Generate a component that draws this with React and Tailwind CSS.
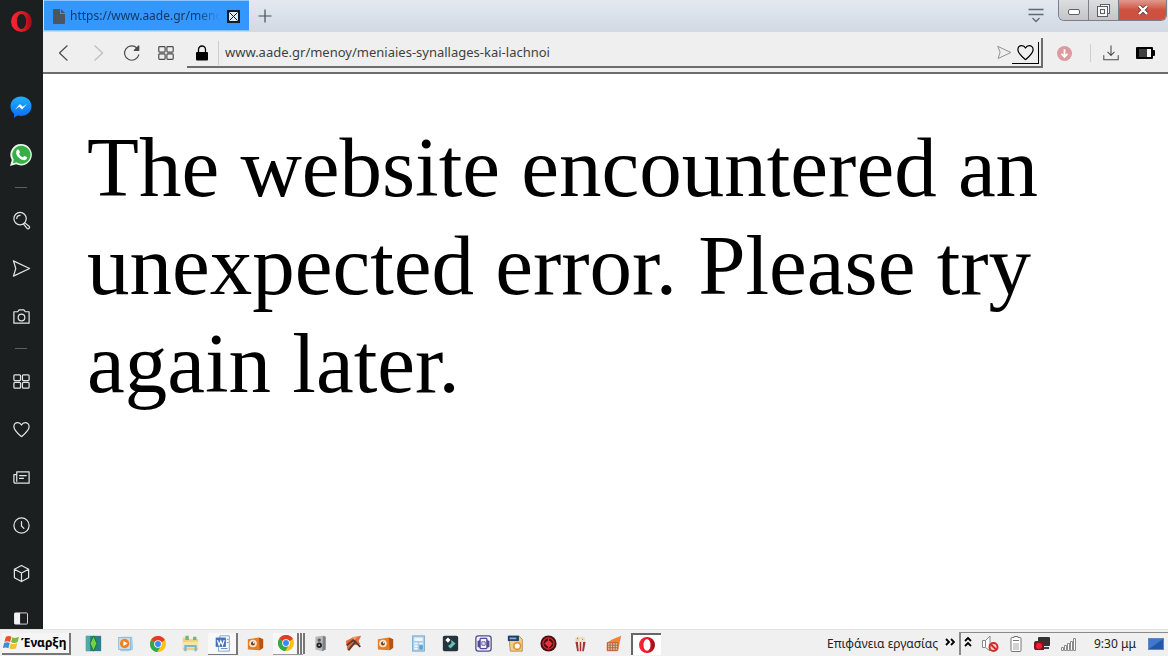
import React from 'react';

const line = { fill: 'none', stroke: 'currentColor', strokeWidth: 1.3, strokeLinejoin: 'round', strokeLinecap: 'round' };

const Icon = ({ box = 20, className = 'size-5', children }) => (
    <svg viewBox={`0 0 ${box} ${box}`} className={`shrink-0 ${className}`} aria-hidden="true" {...line}>{children}</svg>
);

const OperaLogo = ({ className, id }) => (
    <svg viewBox="0 0 22 22" className={className} aria-hidden="true">
        <defs>
            <linearGradient id={id} x1="0" y1="0" x2="1" y2="0">
                <stop offset="0" stopColor="#ff2436" />
                <stop offset="0.55" stopColor="#e01a28" />
                <stop offset="1" stopColor="#9c0a12" />
            </linearGradient>
        </defs>
        <path fill={`url(#${id})`} fillRule="evenodd" d="M11 0a11 11 0 1 0 0 22a11 11 0 0 0 0-22zM11 3.200c2.900 0 4.800 3.600 4.800 7.800s-1.900 7.800-4.800 7.800s-4.800-3.600-4.800-7.800s1.900-7.800 4.800-7.800z" />
    </svg>
);

const ChromeLogo = () => (
    <svg viewBox="0 0 20 20" className="size-4 shrink-0" aria-hidden="true">
        <circle cx="10" cy="10" r="10" fill="#fbc116" />
        <path d="M10 10L1.300 5A10 10 0 0 1 18.700 5z" fill="#e33b2e" />
        <path d="M10 10L1.300 5A10 10 0 0 0 9 20l5-8z" fill="#2da94f" />
        <circle cx="10" cy="10" r="4.800" fill="#fff" />
        <circle cx="10" cy="10" r="3.700" fill="#4285f4" />
    </svg>
);

const Heart = () => <path d="M10 17.500C6 14 2 10.800 2 7c0-2.600 1.900-4.300 4.100-4.300C7.900 2.700 9.200 3.700 10 5.300c.8-1.600 2.100-2.600 3.900-2.600C16.100 2.700 18 4.400 18 7c0 3.800-4 7-8 10.500z" />;

const Plane = () => <path d="M1.500 2L18.500 10L1.500 18L4 10z" />;

const Tiles = () => (
    <>
        <rect x="2" y="3" width="7" height="6" rx="1" />
        <rect x="11" y="3" width="7" height="6" rx="1" />
        <rect x="2" y="11" width="7" height="6" rx="1" />
        <rect x="11" y="11" width="7" height="6" rx="1" />
    </>
);

const sidebarTools = [
    { label: 'Search', art: <><circle cx="8.500" cy="8" r="6.500" /><path d="M5 8c0-2 1.500-3.500 3.500-3.500M13.500 12.500l4.500 3.500c1.500 1.300-.8 3.800-2.200 2.300l-3.600-4.500" /></> },
    { label: 'My Flow', art: <Plane /> },
    { label: 'Snapshot', art: <><path d="M2 5h4l1.500-2h5L14 5h4v12H2z" /><circle cx="10" cy="11" r="3.500" /></> },
];

const sidebarPages = [
    { label: 'Speed Dial', art: <Tiles /> },
    { label: 'Bookmarks', art: <Heart /> },
    { label: 'News', art: <path d="M5 4h13v12H3.500C2.500 16 2 15.500 2 14.500V7h3zM5 7v7M8 8h7M8 11h4" /> },
    { label: 'History', art: <><circle cx="10" cy="10" r="8" /><path d="M10 6v4.500l2.500 2.500" /></> },
    { label: 'Extensions', art: <path d="M10 1.500l7.500 4v9l-7.500 4l-7.500-4v-9zM2.500 5.500l7.500 4l7.500-4M10 9.500v9" /> },
];

const SidebarButton = ({ label, children, className = 'h-12' }) => (
    <button type="button" aria-label={label} className={`flex w-full shrink-0 items-center justify-center ${className}`}>{children}</button>
);

const Divider = () => (
    <div className="flex h-[17px] shrink-0 items-center"><span className="h-px w-3 bg-[#5b5f60]" /></div>
);

const Sidebar = () => (
    <nav className="flex w-[43px] shrink-0 flex-col items-center bg-[#1b1f20] pr-px text-[#e2e4e4]">
        <SidebarButton label="Opera menu" className="mb-[41px] h-[42px]"><OperaLogo id="opera-side" className="size-[21px]" /></SidebarButton>
        <SidebarButton label="Messenger">
            <svg viewBox="0 0 22 22" className="size-[22px]" aria-hidden="true">
                <defs>
                    <linearGradient id="messenger" x1="0" y1="0" x2="0" y2="1">
                        <stop offset="0" stopColor="#1fb0ff" />
                        <stop offset="1" stopColor="#0a6cf5" />
                    </linearGradient>
                </defs>
                <path fill="url(#messenger)" d="M11 0.500c6 0 10.500 4.300 10.500 9.700S17 20 11 20c-1.200 0-2.300-.2-3.300-.5L4 21.700v-4C1.800 16 .5 13.300 .5 10.200C.5 4.800 5 .5 11 .5z" />
                <path fill="#fff" d="M5 13.500l5-5.500l2.700 2.700L17 8l-5 5.500l-2.700-2.700z" />
            </svg>
        </SidebarButton>
        <SidebarButton label="WhatsApp">
            <svg viewBox="0 0 22 22" className="size-[22px]" aria-hidden="true">
                <path fill="#e9f5ea" d="M11.200 0a10.700 10.700 0 1 1-5 20.200L0 22l1.800-6A10.700 10.700 0 0 1 11.200 0z" />
                <path fill="#35b044" d="M11.200 1.800a9 9 0 1 1-4.700 16.500L2.800 19.300l1-3.600A9 9 0 0 1 11.200 1.800z" />
                <path fill="#fff" d="M7.600 5.500c.9-.3 1.200 0 1.500.7l.8 1.800c.2.7-.8 1.400-.9 1.800c.8 1.800 2 2.800 3.800 3.500c.6-.2 1.200-1.400 1.800-1.300l2.200 1.100c.4.300.1 1.500-.4 2.100c-1.100 1.100-2.700 1.200-4.400.5c-2.700-1.100-4.600-3-5.600-5.500c-.6-1.900 0-4 1.200-4.700z" />
            </svg>
        </SidebarButton>
        <Divider />
        {sidebarTools.map((item) => (
            <SidebarButton key={item.label} label={item.label}><Icon className="size-[19px]">{item.art}</Icon></SidebarButton>
        ))}
        <Divider />
        {sidebarPages.map((item) => (
            <SidebarButton key={item.label} label={item.label}><Icon className="size-[19px]">{item.art}</Icon></SidebarButton>
        ))}
        <SidebarButton label="Sidebar setup" className="h-[31px] pt-3">
            <svg viewBox="0 0 16 14" className="h-[13px] w-4" aria-hidden="true">
                <rect x="1" y="1" width="14" height="12" rx="1" fill="none" stroke="currentColor" />
                <rect x="1" y="1" width="6" height="12" fill="#f2f2f2" />
            </svg>
        </SidebarButton>
    </nav>
);

const TabBar = () => (
    <header className="flex h-8 items-start bg-linear-to-b from-[#e4e9f1] to-[#d2d9e2] text-[#3c4043]">
        <div className="ml-px flex h-[31px] w-[205px] shrink-0 items-center border-y border-[#8cc4ff] bg-[#3397fd] pt-px pr-2 pl-[9px]">
            <svg viewBox="0 0 12 15" className="h-[15px] w-3 shrink-0" aria-hidden="true">
                <path fill="#4b5661" d="M1 0h6v5h5v9q0 1-1 1H1q-1 0-1-1V1q0-1 1-1zM8 0l4 4H8z" />
            </svg>
            <span className="ml-[5px] w-[150px] shrink-0 text-[12px] whitespace-nowrap text-[#123a66] mask-r-from-85%">https://www.aade.gr/meno</span>
            <button type="button" aria-label="Close tab" className="ml-[7px] flex size-[13px] shrink-0 items-center justify-center border-2 border-[#141c26] bg-[#dce9f7]">
                <svg viewBox="0 0 9 9" className="size-[9px]" aria-hidden="true"><path d="M0.500 0.500l8 8M8.500 0.500l-8 8" stroke="#141c26" /></svg>
            </button>
        </div>
        <button type="button" aria-label="New tab" className="ml-[9px] flex h-8 items-center">
            <svg viewBox="0 0 14 14" className="size-[14px]" aria-hidden="true"><path d="M7 0.500v13M0.500 7h13" stroke="#4a4f55" strokeWidth="1.200" /></svg>
        </button>
        <button type="button" aria-label="Tab menu" className="mt-2 mr-[14px] ml-auto">
            <svg viewBox="0 0 16 15" className="h-[15px] w-4" aria-hidden="true"><path d="M0.500 1.500h15M0.500 6.500h15M4.500 10l3.500 3.500l3.500-3.500" fill="none" stroke="#62686f" strokeWidth="1.300" /></svg>
        </button>
        <div className="flex h-[21px] overflow-hidden rounded-b-md border border-t-0 border-[#7b8087]">
            <button type="button" aria-label="Minimize" className="flex w-[30px] items-center justify-center border-r border-[#7b8087] bg-linear-to-b from-[#dddee0] to-[#c3c5c8]">
                <span className="mt-1 h-[6px] w-3 rounded-xs border border-[#5c6066] bg-white" />
            </button>
            <button type="button" aria-label="Restore" className="flex w-[30px] items-center justify-center border-r border-[#7b8087] bg-linear-to-b from-[#dddee0] to-[#c3c5c8]">
                <svg viewBox="0 0 13 13" className="size-[13px]" aria-hidden="true" fill="#f5f5f5" stroke="#5c6066">
                    <rect x="3.500" y="0.500" width="9" height="9" />
                    <rect x="0.500" y="2.500" width="10" height="10" />
                    <rect x="3.500" y="5.500" width="4" height="4" />
                </svg>
            </button>
            <button type="button" aria-label="Close" className="flex w-[47px] items-center justify-center bg-linear-to-b from-[#e0988d] via-[#cf5140] to-[#cb5141]">
                <svg viewBox="0 0 12 10" className="h-[10px] w-3" aria-hidden="true">
                    <path d="M2 1l8 8M10 1l-8 8" stroke="#6a3a38" strokeWidth="4" />
                    <path d="M2 1l8 8M10 1l-8 8" stroke="#fff" strokeWidth="2.400" />
                </svg>
            </button>
        </div>
        <div className="w-px" />
    </header>
);

const AddressBar = () => (
    <div className="flex h-[42px] items-center border-b-2 border-[#6d6d6d] bg-[#efefef] pt-[2px] text-[#4b4b4b]">
        <div className="flex w-[144px] shrink-0 items-center justify-between pr-[12px] pl-3">
            <button type="button" aria-label="Back"><Icon className="size-[18px]"><path d="M13.500 2L5 10l8.500 8" /></Icon></button>
            <button type="button" aria-label="Forward" className="text-[#bdbdbd]"><Icon className="size-[18px]"><path d="M6.500 2L15 10l-8.500 8" /></Icon></button>
            <button type="button" aria-label="Reload"><Icon className="size-[18px]"><path d="M17.500 12A8 8 0 1 1 15.500 4.500" /><path d="M17.500 2v5h-5z" fill="currentColor" /></Icon></button>
            <button type="button" aria-label="Speed Dial"><Icon className="size-[18px]"><Tiles /></Icon></button>
        </div>
        <form className="flex h-[30px] grow items-center border-r-2 border-b-2 border-[#6d6d6d] pt-px pl-2" onSubmit={(e) => e.preventDefault()}>
            <svg viewBox="0 0 14 16" className="h-4 w-[14px] shrink-0" aria-hidden="true">
                <rect x="1" y="7" width="12" height="8.500" rx="1" fill="#000" />
                <path d="M3.500 7V4.500a3.500 3.500 0 0 1 7 0V7" fill="none" stroke="#000" strokeWidth="1.300" />
            </svg>
            <span className="ml-[9px] h-6 w-px bg-[#cfcfcf]" />
            <input
                type="text"
                aria-label="Address"
                defaultValue="www.aade.gr/menoy/meniaies-synallages-kai-lachnoi"
                className="ml-[6px] min-w-0 grow bg-transparent text-[13px] text-[#3f3f3f] outline-none"
            />
            <button type="button" aria-label="Send to My Flow" className="text-[#909090]"><Icon className="size-[15px]"><Plane /></Icon></button>
            <button type="button" aria-label="Add to bookmarks" className="mr-[2px] flex h-[22px] w-[27px] items-center justify-center border-r border-b border-black text-black"><Icon className="size-[19px]"><Heart /></Icon></button>
        </form>
        <button type="button" aria-label="Downloader" className="ml-[14px]">
            <svg viewBox="0 0 16 16" className="size-[15px]" aria-hidden="true">
                <circle cx="8" cy="8" r="8" fill="#dc9c9f" />
                <path d="M8 3.500v8M4.800 8.500L8 11.700l3.200-3.200" fill="none" stroke="#fff" strokeWidth="1.800" />
            </svg>
        </button>
        <span className="ml-[18px] h-[18px] w-px bg-[#cfcfcf]" />
        <button type="button" aria-label="Downloads" className="ml-3">
            <Icon className="size-4"><path d="M1 13v5.500h18V13M10 1v12M6 9l4 4l4-4" /></Icon>
        </button>
        <button type="button" aria-label="Battery saver" className="mr-[13px] ml-[17px]">
            <svg viewBox="0 0 19 12" className="h-3 w-[19px]" aria-hidden="true">
                <path d="M1 1h15v3h2v4h-2v3H1z" fill="#000" stroke="#000" strokeWidth="2" strokeLinejoin="round" />
                <rect x="3" y="2" width="8" height="8" fill="#3f3f3f" />
                <rect x="11" y="2" width="4" height="8" fill="#f5f5f5" />
            </svg>
        </button>
    </div>
);

const taskbarItems = [
    { label: 'The Sims', art: <><rect x="1" y="1" width="18" height="18" fill="#2a7f8a" /><path d="M1 1h5v18H1z" fill="#55a9a4" /><path d="M10 1l4 9l-4 9l-4-9z" fill="#6fd34a" stroke="#1c6b35" /></> },
    { label: 'Media Player', art: <><path d="M5 2h13l1 15l-5 2H4z" fill="#a9cce6" /><rect x="2" y="3" width="14" height="14" fill="#c6dff0" stroke="#8fb4d0" /><circle cx="9" cy="10" r="5.500" fill="#f08020" /><path d="M7.500 7v6l5-3z" fill="#fff" /></> },
    { label: 'Chrome', node: <ChromeLogo /> },
    { label: 'Explorer', art: <><path d="M1 3h6l2 2h10v13H1z" fill="#ebd185" /><path d="M4 1h4v5H4zM13 2h4v4h-4z" fill="#72b67d" /><path d="M1 8h18v7H1z" fill="#f7e6a8" /><path d="M4 19v-6h12v6" fill="none" stroke="#78b5dc" strokeWidth="2.500" /></> },
    { label: 'Word', raised: true, art: <><path d="M7 1h11v18H5z" fill="#fff" stroke="#7193c4" /><rect x="2" y="3" width="12" height="11" fill="#4672b8" /><path d="M4 6l2 6l2-5l2 5l2-6" fill="none" stroke="#fff" strokeWidth="1.500" /><path d="M8 16h8M15 5h2M15 9h2" stroke="#4672b8" /></> },
    { label: 'Camera tool', camera: true },
    { label: 'Chrome windows', node: <ChromeLogo />, stacked: true },
    { label: 'Audio', art: <><path d="M4 2l9-1l3 1v15l-4 2l-8-2z" fill="#b5b7b9" /><path d="M13 1l3 1v15l-4 2z" fill="#7d8083" /><circle cx="8.500" cy="6" r="2" fill="#555" /><circle cx="8.500" cy="12" r="3.200" fill="#222" /><circle cx="8.500" cy="12" r="1" fill="#bbb" /></> },
    { label: 'Editor', art: <><path d="M1 7l8-4l10-2l-3 6l2 4l-8 1l-7 6z" fill="#e66a3a" /><path d="M2 12l8-6l8 8M4 18l9-11" fill="none" stroke="#573c35" strokeWidth="2.200" /><path d="M8 3l8-2l-5 5z" fill="#f29b70" /></> },
    { label: 'Camera viewer', camera: true },
    { label: 'Calculator', art: <><rect x="3" y="1" width="14" height="18" fill="#a8cfe9" stroke="#76a9cd" /><rect x="5" y="3" width="10" height="4" fill="#eef7fc" /><path d="M5 10h4M11 10h4M5 13h4M5 16h4" stroke="#f6fbff" strokeWidth="2" /><rect x="11" y="12" width="4" height="5" fill="#649dc8" /></> },
    { label: 'Filmora', art: <><rect x="1" y="1" width="18" height="18" rx="2" fill="#25333c" /><path d="M7 3l3 3l-3 3l-3-3z" fill="#fff" /><path d="M11 6l5 4l-6 6l-3-3l4-3z" fill="#5fc3b5" /></> },
    { label: 'Recorder', art: <><rect x="1" y="1" width="18" height="18" rx="3" fill="#f3f2fb" stroke="#504b94" strokeWidth="1.500" /><path d="M3 7l3-1v9l-3-1zM14 6l3 1v7l-3 1z" fill="#504b94" /><rect x="6" y="4" width="8" height="12" rx="1" fill="none" stroke="#504b94" strokeWidth="1.500" /><path d="M8 8h4v4H8z" fill="none" stroke="#504b94" /></> },
    { label: 'Converter', art: <><path d="M2 1h12l4 4v14H4z" fill="#f3cf83" stroke="#a98a55" /><rect x="1" y="1" width="13" height="6" fill="#1c3f63" /><path d="M3 4h8" stroke="#83b4d7" strokeWidth="2" /><circle cx="12" cy="13" r="4" fill="#fff" stroke="#e8922c" strokeWidth="2" /></> },
    { label: 'Player', art: <><circle cx="10" cy="10" r="9.500" fill="#4b0d12" /><circle cx="10" cy="10" r="6.500" fill="none" stroke="#d62a33" strokeWidth="1.500" /><path d="M6 10l3-3v6zM11 7l3 3l-3 4zM10 4v12" fill="#ef3b42" stroke="#ef3b42" /></> },
    { label: 'Popcorn', art: <><path d="M4 7h12l-2 12H6z" fill="#fff" /><path d="M4 8h3l1 11H6zM9 8h2v11H9zM13 8h3l-2 11h-2z" fill="#a8342e" /><circle cx="7" cy="5" r="3" fill="#e9d7b8" /><circle cx="12" cy="5" r="3.500" fill="#efe2c8" /><path d="M6 4h1M12 5h1" stroke="#6b4a32" /></> },
    { label: 'Movie maker', art: <><path d="M2 9l7-4l10-4l-2 10l-2 8H2z" fill="#ef8338" /><path d="M3 9h12v9H3z" fill="#e3c6ac" stroke="#b0583a" /><path d="M3 12h12M3 15h12M6 9v9M9 9v9M12 9v9" stroke="#b0583a" /></> },
    { label: 'Opera', pressed: true, node: <OperaLogo id="opera-task" className="size-4" /> },
];

const CameraArt = () => (
    <>
        <path d="M1 5l13-2l5 2v10l-4 3l-14-1z" fill="#e77d22" />
        <path d="M14 3l5 2v10l-4 3z" fill="#b75311" />
        <circle cx="7" cy="10" r="4.500" fill="#f7e5d0" />
        <circle cx="7" cy="10" r="2.300" fill="#6c4025" />
        <circle cx="8" cy="9" r="1" fill="#fff" />
    </>
);

const TaskbarItem = ({ item }) => {
    const art = item.node || (
        <svg viewBox="0 0 20 20" className="size-[17px]" aria-hidden="true">{item.camera ? <CameraArt /> : item.art}</svg>
    );
    let frame = 'w-[30px]';
    if (item.raised) frame = 'w-[30px] border-r-2 border-b border-[#777] bg-[#f8f8f8]';
    if (item.pressed) frame = 'w-[30px] border-t-2 border-l-2 border-[#666] bg-white';
    if (item.stacked) frame = 'w-[30px] border-b border-[#999] bg-[#f8f8f8]';
    return (
        <li className="flex flex-1 items-center justify-center">
            <button type="button" aria-label={item.label} className={`flex h-[22px] items-center justify-center ${frame}`}>
                {item.stacked && <span className="w-[7px] shrink-0" />}
                {art}
                {item.stacked && (
                    <span className="ml-[3px] flex h-full shrink-0 gap-px">
                        <span className="w-[2px] bg-[#777]" />
                        <span className="w-[2px] bg-[#777]" />
                        <span className="w-[2px] bg-[#777]" />
                    </span>
                )}
            </button>
        </li>
    );
};

const Taskbar = () => (
    <footer className="flex h-[27px] shrink-0 items-center border-t border-[#e2e2e2] bg-[#f0f0f0] pt-px text-[12px] text-[#222]">
        <button type="button" className="ml-[2px] flex h-[22px] w-[69px] shrink-0 items-center border-r-2 border-b-2 border-[#777] bg-[#f5f5f5] pl-px text-[12px] font-bold whitespace-nowrap text-black">
            <svg viewBox="0 0 18 18" className="mr-px size-[17px] shrink-0" aria-hidden="true">
                <path d="M3 3q3-2 6 0L7.500 8.500q-3-1.500-6 0z" fill="#e8552b" />
                <path d="M10 3.500q3 1.500 7-.5l-1.500 5.500q-4 2-7 0z" fill="#7fb83d" />
                <path d="M1.200 9.500q3-1.500 6 0L5.700 15q-3-1.500-6 0z" fill="#3f8ed8" />
                <path d="M8.200 10q3 1.500 7-.5L13.700 15q-4 2-7 0z" fill="#f5c22e" />
            </svg>
            Έναρξη
        </button>
        <ul className="ml-[6px] flex w-[585px] shrink-0">
            {taskbarItems.map((item) => <TaskbarItem key={item.label} item={item} />)}
        </ul>
        <span className="ml-auto whitespace-nowrap">Επιφάνεια εργασίας</span>
        <button type="button" aria-label="More" className="mr-1 mb-1 ml-[7px]">
            <svg viewBox="0 0 10 8" className="h-2 w-[10px]" aria-hidden="true"><path d="M1 1l3 3l-3 3M6 1l3 3l-3 3" fill="none" stroke="#000" strokeWidth="1.800" /></svg>
        </button>
        <div className="flex h-[23px] w-[209px] shrink-0 items-center border-t border-l-2 border-[#8a8a8a] pl-[3px]">
            <svg viewBox="0 0 8 12" className="mb-1 h-3 w-2" aria-hidden="true"><path d="M1 5l3-3l3 3M1 10l3-3l3 3" fill="none" stroke="#000" strokeWidth="1.800" /></svg>
            <svg viewBox="0 0 18 18" className="ml-[9px] size-[18px]" aria-hidden="true">
                <path d="M1.500 5.500h3v7h-3zM4.500 5.500L9 1v15l-4.500-3.500" fill="#fff" stroke="#888" />
                <circle cx="12.500" cy="12" r="4" fill="#f5d5d3" stroke="#cf2f2a" strokeWidth="2" />
                <path d="M9.700 9.200l5.600 5.600" stroke="#cf2f2a" strokeWidth="2" />
            </svg>
            <svg viewBox="0 0 12 18" className="ml-[11px] h-[18px] w-3" aria-hidden="true">
                <path d="M4 1.500h4v1h2q1 0 1 1v12q0 1-1 1H2q-1 0-1-1v-12q0-1 1-1h2z" fill="#fff" stroke="#777" />
                <rect x="3" y="8" width="6" height="7" fill="#d2d2d2" />
                <path d="M3 5.500h6" stroke="#777" />
            </svg>
            <svg viewBox="0 0 16 14" className="ml-3 h-[14px] w-4" aria-hidden="true">
                <rect x="4" y="0" width="12" height="9" rx="1" fill="#333" />
                <path d="M1 5h9v8H1z" fill="#aa1e2c" />
                <rect x="0" y="4" width="10" height="9" rx="2" fill="#7b1620" />
                <circle cx="5" cy="9" r="3" fill="#ee2234" />
                <path d="M10 11h5" stroke="#444" strokeWidth="2" />
            </svg>
            <svg viewBox="0 0 15 13" className="ml-[11px] h-[13px] w-[15px]" aria-hidden="true" fill="#fff" stroke="#8a8a8a">
                <path d="M0.500 9.500h2v3h-2zM3.500 7.500h2v5h-2zM6.500 5.500h2v7h-2zM9.500 3.500h2v9h-2zM12.500 0.500h2v12h-2z" />
            </svg>
            <time className="ml-[18px] whitespace-nowrap">9:30 μμ</time>
            <svg viewBox="0 0 16 13" className="mr-1 ml-auto h-[13px] w-4 shrink-0" aria-hidden="true">
                <rect x="0.500" y="0.500" width="15" height="11" fill="#3f78cf" stroke="#5d88bf" />
                <path d="M1 11L15 1v10z" fill="#2557a8" />
            </svg>
        </div>
    </footer>
);

const App = () => {
    return (
        <div className="flex min-h-screen flex-col bg-white font-['Noto_Sans','Open_Sans',sans-serif]">
            <div className="flex grow">
                <Sidebar />
                <div className="flex min-w-0 grow flex-col">
                    <TabBar />
                    <AddressBar />
                    <main className="grow px-11 pt-[44px]">
                        <p className="font-['Liberation_Serif',serif] text-[85px] leading-[98px] text-black">
                            The website encountered an unexpected error. Please try again later.
                        </p>
                    </main>
                </div>
            </div>
            <Taskbar />
        </div>
    );
};

export default App;
